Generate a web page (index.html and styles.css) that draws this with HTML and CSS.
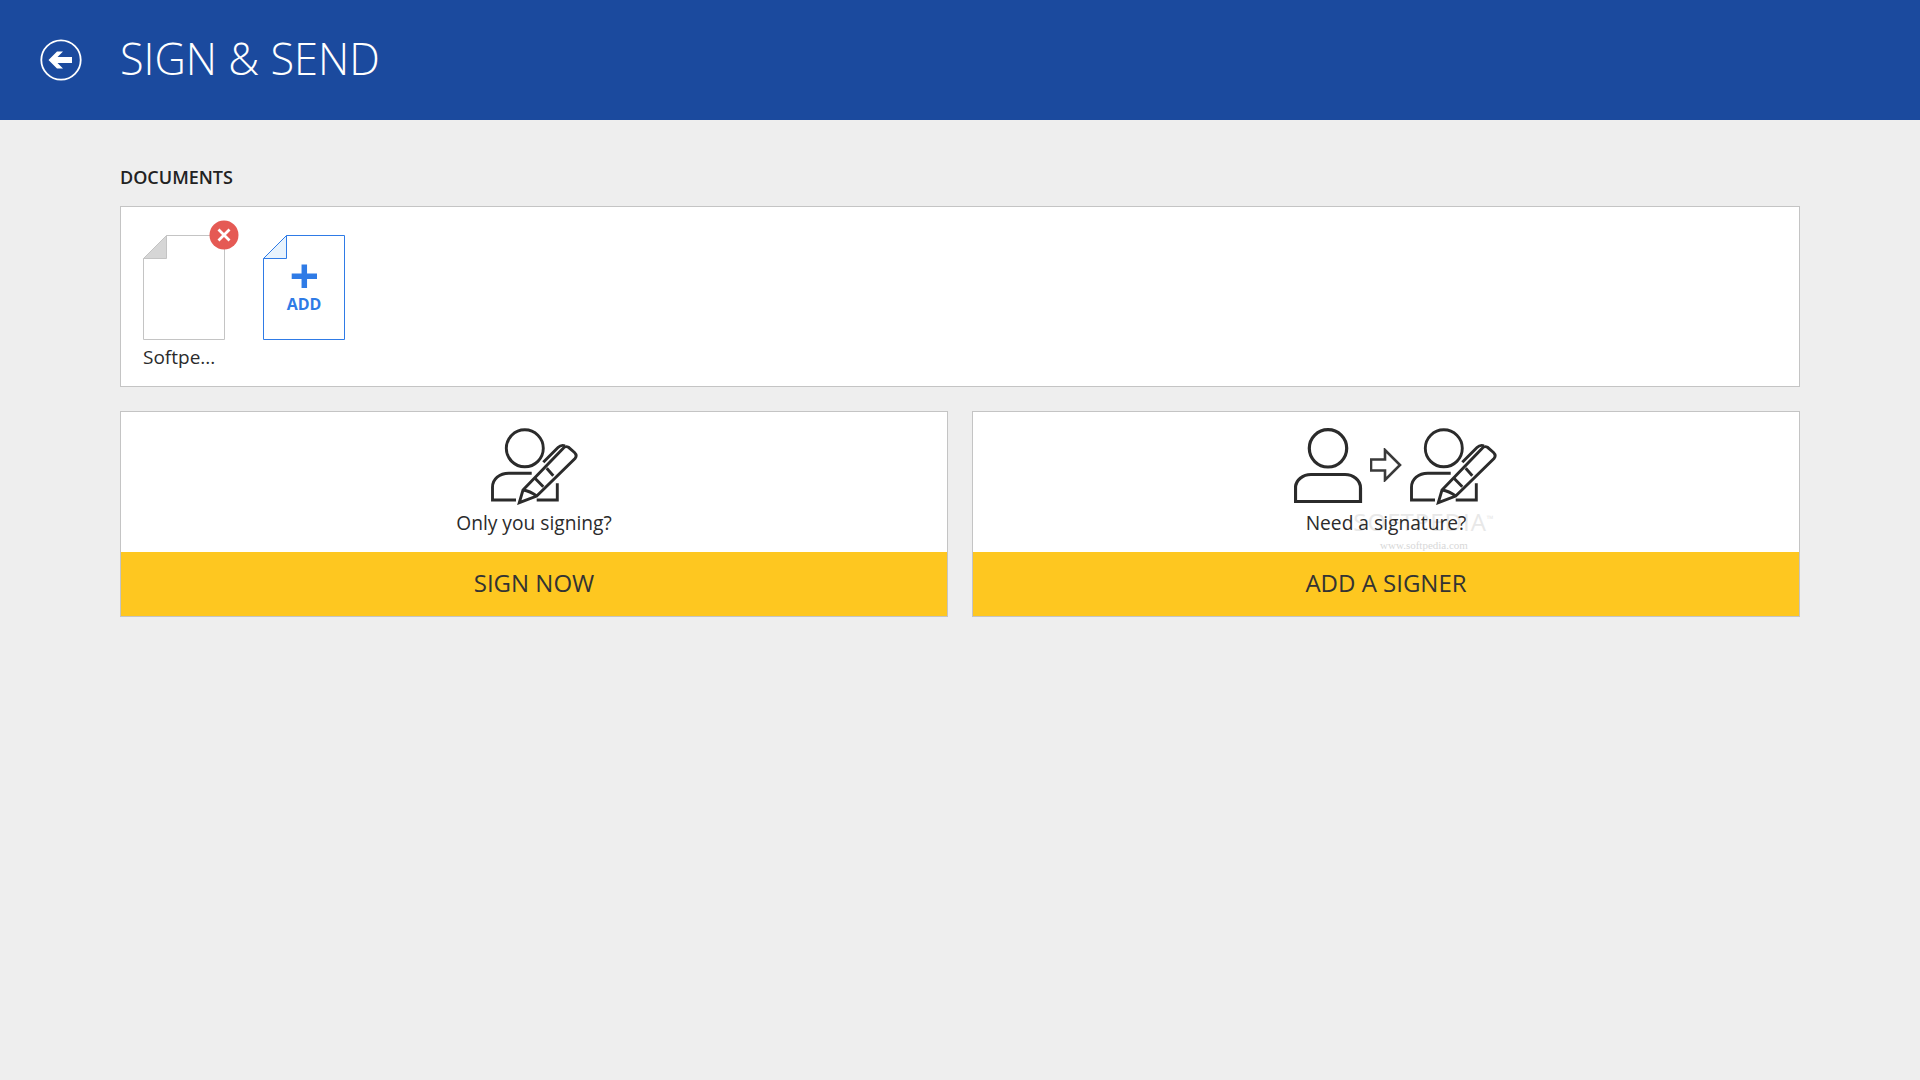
FILE: index.html
```html
<!DOCTYPE html>
<html lang="en">

<head>
    <meta charset="UTF-8">
    <title>Sign &amp; Send</title>
    <link rel="stylesheet" href="styles.css">
</head>

<body>
    <svg class="defs" width="0" height="0">
        <symbol id="signer" viewBox="0 0 90 80">
            <g fill="none" stroke="#2b2b2b" stroke-width="2.9">
                <circle cx="34.8" cy="23.3" r="18.5" />
                <path d="M26 75H2.5V62.3C2.5 54 9.5 48.3 18.8 48.3H41.7" />
                <path d="M46.7 75H67.3V58.3" />
                <path d="M29.3 77.7L33 65L73 23.5Q75.5 20.5 78.5 22.3L84.5 27.5Q87.5 30.5 85 33.5L46.7 71Z" fill="#fff" />
                <path d="M33 65Q40 66 46.7 71M45 53.3L53.3 61.7M56.7 43.3L63.3 50.7M53.3 37.3L68 22.5Q71 19.5 75 20.8" />
            </g>
        </symbol>
    </svg>

    <header class="topbar">
        <svg class="back" width="42" height="42" viewBox="0 0 42 42">
            <circle cx="21" cy="21" r="19.7" fill="none" stroke="#fff" stroke-width="1.8" />
            <path d="M8.5 21L17 12.5H23L17.5 18H32V24H17.5L23 29.5H17Z" fill="#fff" />
        </svg>
        <h1 class="title">SIGN &amp; SEND</h1>
    </header>

    <main class="content">
        <h2 class="section-title">DOCUMENTS</h2>

        <section class="docs">
            <div class="doc">
                <div class="doc-icon">
                    <svg width="82" height="105" viewBox="0 0 82 105">
                        <path d="M23.5 .5H81.5V104.5H.5V23.5Z" fill="#fff" stroke="#c4c4c4" />
                        <path d="M23.5 .5V23.5H.5Z" fill="#d6d6d6" stroke="#c4c4c4" />
                    </svg>
                    <span class="remove">
                        <svg width="30" height="30" viewBox="0 0 30 30">
                            <circle cx="15" cy="15" r="14.5" fill="#e55a54" />
                            <path d="M9.5 9.5L20.5 20.5M20.5 9.5L9.5 20.5" stroke="#fff" stroke-width="2.8" />
                        </svg>
                    </span>
                </div>
                <div class="doc-name">Softpe...</div>
            </div>
            <div class="doc">
                <div class="doc-icon">
                    <svg width="82" height="105" viewBox="0 0 82 105">
                        <path d="M23.5 .5H81.5V104.5H.5V23.5Z" fill="#fff" stroke="#2f7be6" />
                        <path d="M23.5 .5V23.5H.5Z" fill="#e8f3fd" stroke="#2f7be6" />
                        <path d="M41.3 29.5V53M28.7 41.3H54" stroke="#2f7be6" stroke-width="5.5" />
                    </svg>
                    <span class="add-label">ADD</span>
                </div>
            </div>
        </section>

        <section class="actions">
            <div class="card">
                <div class="card-top">
                    <div class="card-icons card-icons-single">
                        <svg width="90" height="80"><use href="#signer" /></svg>
                    </div>
                    <p class="card-text">Only you signing?</p>
                </div>
                <div class="card-btn">SIGN NOW</div>
            </div>
            <div class="card">
                <div class="card-top">
                    <div class="card-icons card-icons-pair">
                        <svg class="person" width="70" height="80" viewBox="0 0 70 80">
                            <g fill="none" stroke="#2b2b2b" stroke-width="3.2">
                                <circle cx="34" cy="23.3" r="18.7" />
                                <path d="M1.5 76.5V63C1.5 55 9 49.5 17 49.5H51C59 49.5 66.5 55 66.5 63V76.5Z" />
                            </g>
                        </svg>
                        <svg class="arrow" width="32" height="34" viewBox="0 0 32 34">
                            <path d="M1 11.5H15V2L30 17L15 32V22.5H1Z" fill="none" stroke="#3a3a3a" stroke-width="2.6" />
                        </svg>
                        <svg width="90" height="80"><use href="#signer" /></svg>
                    </div>
                    <p class="card-text">Need a signature?</p>
                    <div class="watermark">
                        <span class="wm-name">SOFTPEDIA<sup>™</sup></span>
                        <span class="wm-url">www.softpedia.com</span>
                    </div>
                </div>
                <div class="card-btn">ADD A SIGNER</div>
            </div>
        </section>
    </main>
</body>

</html>
```

FILE: styles.css
```css
* {
    box-sizing: border-box;
}

body {
    margin: 0;
    height: 1080px;
    overflow: hidden;
    background-color: #eee;
    font-family: "Open Sans", "Noto Sans", sans-serif;
    color: #2b2b2b;
}

.defs {
    position: absolute;
}

.topbar {
    height: 120px;
    padding-left: 40px;
    display: flex;
    align-items: center;
    background-color: #1b4a9e;
}

.back {
    margin-right: 38px;
}

.title {
    margin: 0 0 4px;
    font-size: 43.3px;
    font-weight: 340;
    color: #fff;
}

.content {
    padding: 0 120px;
}

.section-title {
    margin: 0;
    height: 86px;
    padding-top: 43px;
    font-size: 18px;
    line-height: 28px;
    font-weight: 600;
    color: #222;
}

.docs {
    height: 181px;
    padding: 28px 22px 0;
    display: flex;
    gap: 38px;
    background-color: #fff;
    border: 1px solid #c4c4c4;
}

.doc {
    width: 82px;
}

.doc-icon {
    position: relative;
    height: 105px;
}

.doc-icon svg {
    display: block;
}

.remove {
    position: absolute;
    top: -15px;
    right: -14px;
}

.add-label {
    position: absolute;
    top: 59px;
    left: 0;
    width: 82px;
    text-align: center;
    font-size: 16px;
    line-height: 20px;
    font-weight: 700;
    color: #2f7be6;
}

.doc-name {
    margin-top: 3px;
    font-size: 19px;
    line-height: 28px;
    white-space: nowrap;
}

.actions {
    margin-top: 24px;
    display: grid;
    grid-template-columns: 1fr 1fr;
    gap: 24px;
}

.card {
    height: 206px;
    display: flex;
    flex-direction: column;
    border: 1px solid #c4c4c4;
    background-color: #fff;
}

.card-top {
    position: relative;
    height: 140px;
    padding-top: 13px;
}

.card-icons {
    height: 84px;
    display: flex;
    justify-content: center;
}

.card-icons-single {
    padding-left: 2px;
}

.card-icons-pair {
    padding-left: 20px;
}

.person {
    margin-right: -1px;
}

.arrow {
    margin: 23px 7px 0 7px;
}

.card-text {
    position: relative;
    z-index: 1;
    margin: 0;
    text-align: center;
    font-size: 19.2px;
    line-height: 28px;
}

.card-btn {
    height: 64px;
    display: flex;
    align-items: center;
    justify-content: center;
    padding-bottom: 4px;
    background-color: #fec720;
    font-size: 24px;
    font-weight: 500;
    color: #333;
}

.watermark {
    position: absolute;
    top: 92px;
    left: 386px;
    width: 130px;
    display: flex;
    flex-direction: column;
    align-items: center;
    color: #e8e8e8;
}

.wm-name {
    font-size: 24px;
    line-height: 30px;
    letter-spacing: 1px;
    white-space: nowrap;
}

.wm-name sup {
    font-size: 9px;
}

.wm-url {
    font-family: "Liberation Serif", serif;
    font-size: 11px;
    line-height: 16px;
    color: #d8d8d8;
}
```
